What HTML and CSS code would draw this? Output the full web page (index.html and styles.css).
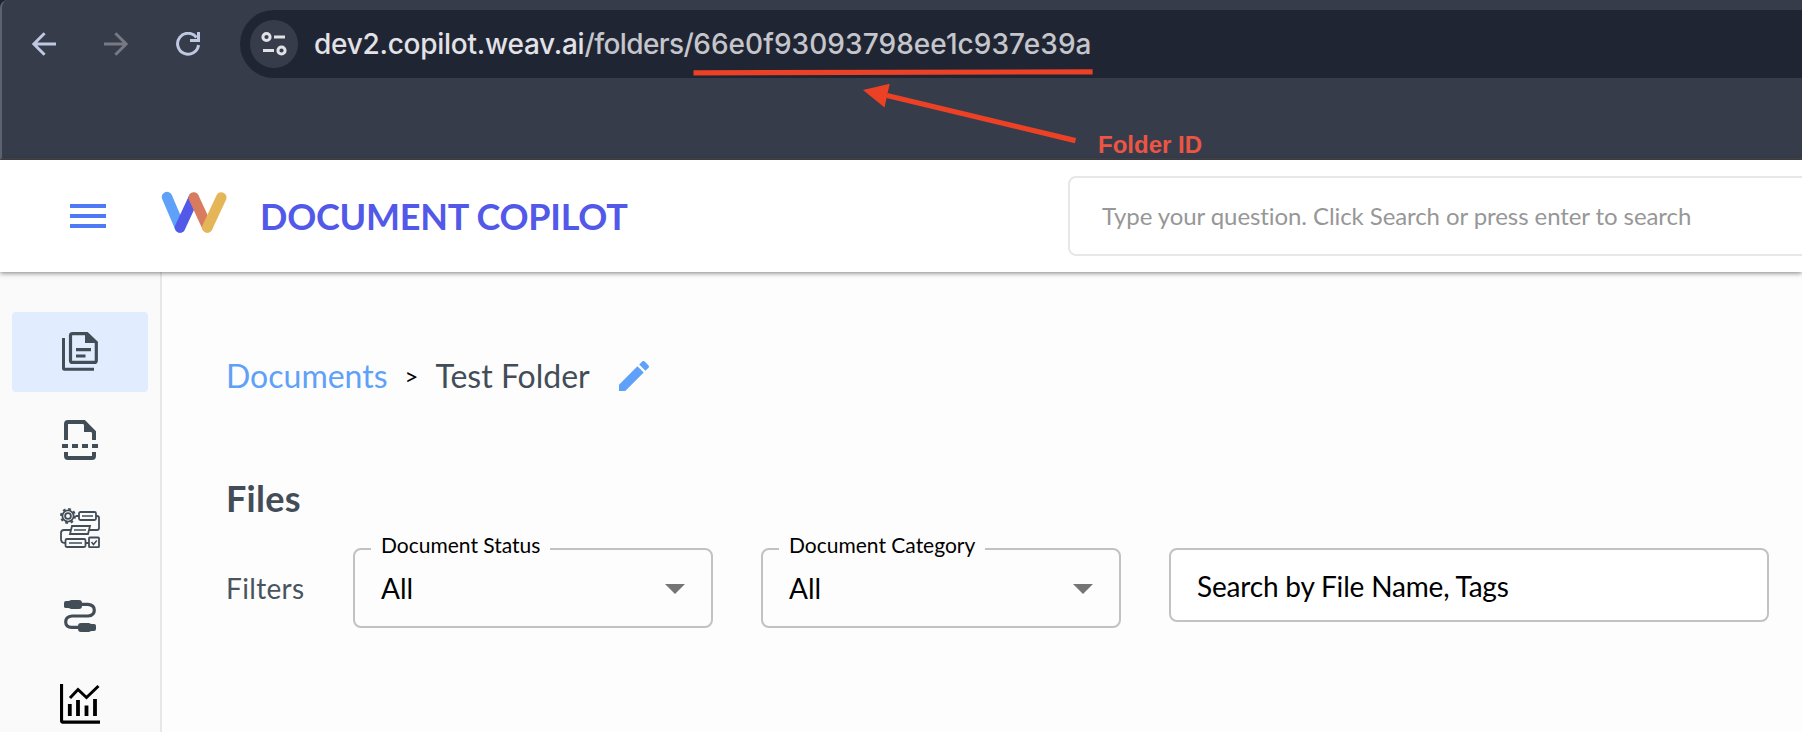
FILE: index.html
```html
<!DOCTYPE html>
<html lang="en">
<head>
<meta charset="utf-8">
<title>Document Copilot</title>
<link rel="stylesheet" href="styles.css">
</head>
<body>
<div class="browser">
  <div class="toolbar">
    <svg class="nav back" viewBox="0 0 24 24"><path d="M24 12H2M12.600 1.200 1.800 12l10.800 10.800"/></svg>
    <svg class="nav forward" viewBox="0 0 24 24"><path d="M0 12H22M11.400 1.200 22.200 12 11.400 22.800"/></svg>
    <svg class="nav reload" viewBox="0 0 24 24"><path d="M22.500 13A10.500 10.500 0 1 1 20.500 5.500M22.500 0V8.500H14"/></svg>
    <div class="omnibox">
      <span class="site">
        <svg viewBox="0 0 26 26"><circle cx="5.500" cy="6" r="3.600"/><circle cx="20.500" cy="19.500" r="3.600"/><path d="M13 6H24M2 19.500H13"/></svg>
      </span>
      <span class="url">dev2.copilot.weav.ai<span class="path">/folders/<span class="folder-id">66e0f93093798ee1c937e39a</span></span></span>
    </div>
  </div>
  <svg class="annotation" viewBox="0 0 540 100">
    <path class="stroke" d="M13.500 12.800 412.600 11.800"/>
    <path class="stroke" d="M207 35.500 395.500 80.600"/>
    <path class="head" d="M183 30 209.700 23.800 204.500 47.600z"/>
  </svg>
  <span class="note">Folder ID</span>
</div>

<header class="header">
  <svg class="menu" viewBox="0 0 36 24"><path d="M0 2H36M0 12H36M0 22H36"/></svg>
  <svg class="logo" viewBox="0 0 66 42">
    <path class="sky" d="M6 6 19 36.500"/>
    <path class="indigo" d="M19 36.500 32.700 7"/>
    <path class="coral" d="M32.700 6.500 46.300 36"/>
    <path class="gold" d="M46.300 36.500 60.300 6.500"/>
  </svg>
  <h1 class="title">DOCUMENT COPILOT</h1>
  <div class="ask">Type your question. Click Search or press enter to search</div>
</header>

<div class="body">
  <nav class="sidebar">
    <a class="item active">
      <svg class="files-icon" width="36" height="39" viewBox="0 0 36 39">
        <path d="M1.500 6V36.200Q1.500 37.200 2.500 37.200H32" fill="none" stroke="#434d58" stroke-width="3"/>
        <path d="M10.500 1.600H25L34.300 10.500V28.400Q34.300 30.400 32.300 30.400H10.500Q8.500 30.400 8.500 28.400V3.600Q8.500 1.600 10.500 1.600Z" fill="none" stroke="#434d58" stroke-width="3.200"/>
        <path d="M23 1V11H34.500L25.500 1Z" fill="#434d58"/>
        <path d="M14 17.600H29M14 24H23.500" stroke="#434d58" stroke-width="3.200"/>
      </svg>
    </a>
    <a class="item">
      <svg width="36" height="40" viewBox="0 0 36 40">
        <path d="M4 20V4Q4 2 6 2H22L32 12V20M4 32V36Q4 38 6 38H30Q32 38 32 36V32" fill="none" stroke="#434d58" stroke-width="4"/>
        <path d="M22 1V12H33.500L24 1.500Z" fill="#434d58"/>
        <path d="M0 26H6M10 26H16M20 26H26M30 26H36" stroke="#434d58" stroke-width="4"/>
      </svg>
    </a>
    <a class="item">
      <svg width="40" height="40" viewBox="0 0 40 40" fill="none" stroke="#434d58" stroke-width="1.800">
        <circle cx="8" cy="8" r="5.600"/><circle cx="8" cy="8" r="2.900"/>
        <circle cx="8" cy="8" r="7" stroke-width="2" stroke-dasharray="2.750 2.750"/>
        <rect x="19" y="4" width="17" height="8" rx="1.500"/>
        <path d="M15.500 8H19M36 8H37Q39 8 39 10V20Q39 22 37 22H29M12 18H30L28 26H10ZM11 22H4Q1 22 1 25V31Q1 35 5 35M26 35H29"/>
        <rect x="5.500" y="31" width="20" height="8" rx="1.500"/>
        <rect x="29" y="29.500" width="10" height="9.700" rx=".8"/>
        <path d="M22 8H33M14 22H26M9 35H22" stroke-width="1.500"/>
        <path d="M31.500 34 33.500 36.500 36.800 32.500" stroke-width="1.500"/>
      </svg>
    </a>
    <a class="item">
      <svg width="32" height="32" viewBox="0 0 32 32">
        <path d="M16 4.400H24Q30.300 5 30.300 10.200T24 16H8Q1.700 16.500 1.700 22T8 27.300H16" fill="none" stroke="#434d58" stroke-width="3.200"/>
        <path d="M7 0H15Q18 0 18 3V6Q18 9 15 9H7Q5.500 8 4 8H2Q0 8 0 6.500V3Q0 1 2 1H4Q5.500 1 7 0ZM25 32H17Q14 32 14 29V26Q14 23 17 23H25Q26.500 24 28 24H30Q32 24 32 26V29Q32 31 30 31H28Q26.500 31 25 32Z" fill="#434d58"/>
      </svg>
    </a>
    <a class="item">
      <svg width="40" height="40" viewBox="0 0 40 40" fill="none" stroke="#000">
        <path d="M1.500 0V36Q1.500 38.200 3.700 38.200H40" stroke-width="3.200"/>
        <path d="M9.800 20V32M18 16V32M26.500 21.500V32M35 15V32" stroke-width="3.800"/>
        <path d="M10 14 18 5.500 26.500 13.500 38.500 2" stroke-width="3"/>
      </svg>
    </a>
  </nav>

  <main class="main">
    <div class="crumbs">
      <a class="link">Documents</a>
      <span class="sep">&gt;</span>
      <span class="current">Test Folder</span>
      <svg class="edit" viewBox="0 0 24 24"><path d="M3 17.250V21h3.750L17.810 9.940l-3.750-3.750L3 17.250zM20.710 7.040c.39-.39.39-1.020 0-1.410l-2.340-2.340c-.39-.39-1.020-.39-1.410 0l-1.830 1.830 3.750 3.750 1.830-1.830z"/></svg>
    </div>
    <h2 class="heading">Files</h2>
    <div class="filters">
      <span class="filters-label">Filters</span>
      <fieldset class="select">
        <legend class="status">Document Status</legend>
        <div class="value"><span>All</span><i class="caret"></i></div>
      </fieldset>
      <fieldset class="select">
        <legend class="category">Document Category</legend>
        <div class="value"><span>All</span><i class="caret"></i></div>
      </fieldset>
      <div class="file-search">Search by File Name, Tags</div>
    </div>
  </main>
</div>
</body>
</html>
```
FILE: styles.css
```css
* { box-sizing: border-box; }
body { margin: 0; width: 1802px; height: 732px; overflow: hidden; background: #fdfdfd; font-family: Lato, "Liberation Sans", sans-serif; font-variant-ligatures: none; color: #000; }
svg { display: block; flex: none; }

.browser { position: relative; height: 160px; background: #373c4b; border-left: 2px solid #5d626f; border-bottom: 2px solid #45464b; border-top-left-radius: 8px; box-shadow: -8px -8px 0 #1f2433; }
.toolbar { display: flex; align-items: center; padding: 10px 0 0 30px; height: 78px; }
.nav { width: 24px; height: 24px; fill: none; stroke: #bec8e0; stroke-width: 3; }
.forward { margin-left: 48px; stroke: #777983; }
.reload { margin-left: 48px; }
.omnibox { flex: 1; display: flex; align-items: center; height: 68px; margin-left: 40px; padding-left: 10px; background: #202534; border-radius: 34px 0 0 34px; }
.site { display: flex; align-items: center; justify-content: center; width: 48px; height: 48px; border-radius: 50%; background: #373c4b; }
.site svg { width: 26px; height: 26px; fill: none; stroke: #e1e2e8; stroke-width: 3; }
.url { margin-left: 16px; font: 450 28px/40px Inter, sans-serif; color: #e2e2e7; white-space: nowrap; letter-spacing: -.27px; }
.path { color: #c5c6cb; letter-spacing: -.6px; }
.folder-id { letter-spacing: .06px; }
.annotation { position: absolute; left: 678px; top: 60px; width: 540px; height: 100px; }
.stroke { fill: none; stroke: #ec4125; stroke-width: 5.200; }
.head { fill: #ec4125; }
.note { position: absolute; left: 1096px; top: 131px; font: bold 24px/28px "Liberation Sans", sans-serif; color: #ec5544; }

.header { position: relative; display: flex; align-items: center; height: 112px; padding-left: 70px; background: #fff; box-shadow: 0 1px 5px rgba(0,0,0,.5); }
.menu { width: 36px; height: 24px; fill: none; stroke: #4f7af5; stroke-width: 4; }
.logo { width: 66px; height: 42px; margin: -8px 0 0 55px; fill: none; stroke-width: 10.500; stroke-linecap: round; }
.sky { stroke: #5fa1f8; }
.gold { stroke: #e5b658; }
.coral { stroke: #d97b5f; }
.indigo { stroke: #5259e8; }
.title { flex: none; margin: 0 0 0 33px; width: 808px; font-size: 36px; font-weight: 700; line-height: 44px; letter-spacing: -.25px; color: #5259e8; white-space: nowrap; }
.ask { flex: none; width: 780px; height: 80px; padding-left: 32px; border: 2px solid #e7e7e7; border-radius: 8px; font-size: 24px; line-height: 76px; letter-spacing: -.08px; color: #979797; white-space: nowrap; }

.body { display: flex; height: 460px; }
.sidebar { display: flex; flex-direction: column; gap: 8px; width: 162px; flex: none; padding: 40px 12px 0; background: #fafafa; border-right: 2px solid #e7e7e7; }
.item { display: flex; flex: none; align-items: center; justify-content: center; height: 80px; border-radius: 4px; }
.active { background: #e1edff; }
.files-icon { margin-bottom: 1px; }
.main { flex: 1; padding: 80px 0 0 64px; }
.crumbs { display: flex; align-items: center; height: 48px; font-size: 32px; line-height: 48px; white-space: nowrap; }
.link { color: #5fa1f8; }
.sep { margin: 0 17px; font-size: 24px; }
.current { color: #434d58; }
.edit { width: 40px; height: 40px; margin-left: 24px; fill: #5fa1f8; }
.heading { margin: 74px 0 0; font-size: 36px; font-weight: 700; line-height: 48px; letter-spacing: .25px; color: #434d58; }
.filters { display: flex; align-items: flex-start; margin-top: 14px; }
.filters-label { width: 125px; flex: none; font-size: 28px; line-height: 40px; letter-spacing: .35px; margin-top: 32px; margin-right: 2px; color: #4a5460; }
.select { width: 360px; height: 92px; margin: 0 48px 0 0; padding: 0 26px; border: 2px solid #c2c2c2; border-radius: 8px; min-width: 0; }
.select legend { height: 26px; margin-left: -10px; padding: 0 10px; font-size: 21px; line-height: 17px; white-space: nowrap; }
.status { width: 179px; }
.category { width: 206px; }
.value { display: flex; align-items: center; justify-content: space-between; height: 52px; font-size: 28px; }
.caret { margin-top: 2px; border: 10px solid transparent; border-top-color: #757575; border-bottom: 0; }
.file-search { width: 600px; height: 74px; margin-top: 12px; padding-left: 26px; background: #fff; border: 2px solid #c2c2c2; border-radius: 8px; font-size: 28px; line-height: 72px; letter-spacing: -.18px; white-space: nowrap; }
```
